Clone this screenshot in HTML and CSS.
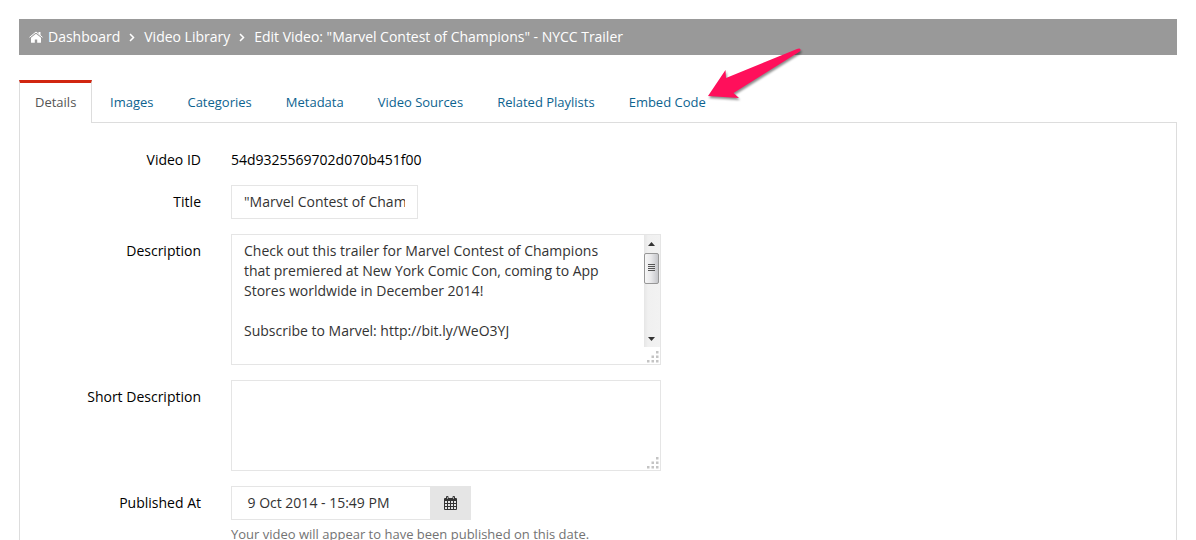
FILE: index.html
```html
<!DOCTYPE html>
<html lang="en">
<head>
<meta charset="utf-8">
<title>Edit Video</title>
<link rel="stylesheet" href="styles.css">
</head>
<body>
<nav class="breadcrumb">
  <svg class="home" viewBox="0 0 14 12" width="14" height="12"><path d="M7 2.700 12 6.800v4.400q0 .5-.5.5H8.200V8.500H5.800v3.200H2.500q-.5 0-.5-.5V6.800z"/><path d="M9.500 1h2v3.500l-2-1.700z"/><path class="roof" d="M.500 6.300 7 1l6.500 5.300"/></svg>
  <a>Dashboard</a>
  <svg class="sep" viewBox="0 0 6 9" width="6" height="9"><path d="M1 1l3.500 3.500L1 8"/></svg>
  <a>Video Library</a>
  <svg class="sep" viewBox="0 0 6 9" width="6" height="9"><path d="M1 1l3.500 3.500L1 8"/></svg>
  <span class="current">Edit Video: "Marvel Contest of Champions" - NYCC Trailer</span>
</nav>
<ul class="tabs">
  <li class="tab active">Details</li>
  <li class="tab">Images</li>
  <li class="tab">Categories</li>
  <li class="tab">Metadata</li>
  <li class="tab">Video Sources</li>
  <li class="tab">Related Playlists</li>
  <li class="tab">Embed Code</li>
</ul>
<main class="panel">
  <div class="row"><div class="label">Video ID</div><div class="static">54d9325569702d070b451f00</div></div>
  <div class="row"><div class="label">Title</div><div class="field title"><div class="clip">"Marvel Contest of Champions" - NYCC Trailer</div></div></div>
  <div class="row"><div class="label">Description</div>
    <div class="field area tall">
      <div class="text">Check out this trailer for Marvel Contest of Champions
<span class="tight">that premiered at New York Comic Con, coming to App</span>
Stores worldwide in December 2014!

Subscribe to Marvel: http://bit.ly/WeO3YJ</div>
      <div class="scrollbar">
        <svg class="up" viewBox="0 0 7 4" width="7" height="4"><path d="M3.500 0 7 4H0z"/></svg>
        <div class="thumb"><i></i><i></i><i></i><i></i></div>
        <svg class="down" viewBox="0 0 7 4" width="7" height="4"><path d="M0 0h7L3.500 4z"/></svg>
      </div>
      <svg class="grip" viewBox="0 0 12 12" width="12" height="12"><path d="M9 0h2.500v2.500H9zM4.500 4.500h2.500v2.500h-2.500zM9 4.500h2.500v2.500H9zM0 9h2.500v2.500H0zM4.500 9h2.500v2.500h-2.500zM9 9h2.500v2.500H9z"/></svg>
    </div>
  </div>
  <div class="row"><div class="label">Short Description</div>
    <div class="field area short">
      <svg class="grip" viewBox="0 0 12 12" width="12" height="12"><path d="M9 0h2.500v2.500H9zM4.500 4.500h2.500v2.500h-2.500zM9 4.500h2.500v2.500H9zM0 9h2.500v2.500H0zM4.500 9h2.500v2.500h-2.500zM9 9h2.500v2.500H9z"/></svg>
    </div>
  </div>
  <div class="row"><div class="label">Published At</div>
    <div>
      <div class="group">
        <div class="field date">9 Oct 2014 - 15:49 PM</div>
        <div class="addon"><svg class="calendar" viewBox="0 0 13 14" width="13" height="14"><path fill-rule="evenodd" d="M1 2h1V1q0-1 1-1h.5q1 0 1 1v1h4V1q0-1 1-1h.5q1 0 1 1v1h1q1 0 1 1v10q0 1-1 1H1q-1 0-1-1V3q0-1 1-1zM1 5v2h2V5zm3 0v2h2V5zm3 0v2h2V5zm3 0v2h2V5zM1 8v2h2V8zm3 0v2h2V8zm3 0v2h2V8zm3 0v2h2V8zM1 11v2h2v-2zm3 0v2h2v-2zm3 0v2h2v-2zm3 0v2h2v-2zM3 1v2h.6V1zm6.400 0v2h.6V1z"/></svg></div>
      </div>
      <div class="help">Your video will appear to have been published on this date.</div>
    </div>
  </div>
</main>
<svg class="pointer" viewBox="0 0 110 65" width="110" height="65"><path d="M8 56 25.500 30 26 38 97 9Q100 8 100.500 9.500 101 11 99 12L33.500 53 39 58z"/></svg>
</body>
</html>
```

FILE: styles.css
```css
* { box-sizing: border-box; }
body {
  margin: 0;
  padding: 19px 19px 0;
  height: 540px;
  overflow: hidden;
  background: #fff;
  color: #000;
  font: 14px/20px "Open Sans", sans-serif;
}
.breadcrumb {
  display: flex;
  align-items: center;
  height: 36px;
  padding-left: 10px;
  background: #999;
  color: #fff;
  white-space: nowrap;
}
.home { margin-right: 5px; fill: #fff; }
.home .roof { fill: none; stroke: #fff; stroke-width: 1; }
.sep { margin: 1px 9px 0 9px; fill: none; stroke: #fff; stroke-width: 1.5; }
.current { letter-spacing: -.02px; }
.tabs {
  display: flex;
  gap: 2px;
  height: 43px;
  margin: 25px 0 -1px;
  padding: 0;
  list-style: none;
  position: relative;
}
.tab {
  padding: 13px 16px 0;
  color: #0d638f;
  font-size: 13px;
  line-height: 19px;
  white-space: nowrap;
}
.tab.active {
  width: 73px;
  padding: 10px 15px 0;
  border: 1px solid #ddd;
  border-top: 3px solid #d12610;
  border-bottom: 0;
  background: #fff;
  color: #555;
}
.panel {
  height: 440px;
  padding-top: 20px;
  border: 1px solid #ddd;
}
.row { display: flex; margin-bottom: 15px; }
.label {
  width: 181px;
  margin-right: 30px;
  padding-top: 7px;
  text-align: right;
}
.static { padding-top: 7px; }
.field {
  border: 1px solid #e5e5e5;
  color: #333;
  white-space: nowrap;
}
.title { width: 187px; height: 34px; padding: 6px 12px; }
.clip { overflow: hidden; }
.area { position: relative; width: 430px; }
.tall { height: 131px; }
.short { height: 91px; }
.text { padding: 6px 12px; white-space: pre; }
.tight { letter-spacing: -.03px; }
.grip { position: absolute; right: 1px; bottom: 1px; fill: #c4c4c4; }
.scrollbar {
  position: absolute;
  top: 0;
  right: 0;
  width: 16px;
  height: 112px;
  padding-right: 1px;
  display: flex;
  flex-direction: column;
  align-items: center;
  background: linear-gradient(90deg, #e6e6e6, #f0f0f0 25%, #f2f2f2);
}
.up { margin-top: 7px; fill: #333; }
.down { margin: auto 0 6px; fill: #333; }
.thumb {
  display: flex;
  flex-direction: column;
  gap: 1px;
  align-items: center;
  width: 15px;
  height: 31px;
  margin-top: 7px;
  padding-top: 10px;
  border: 1px solid #979797;
  border-radius: 2px;
  background: linear-gradient(90deg, #f6f6f6, #e9e9eb 45%, #c5c6ca);
}
.thumb i { width: 7px; height: 1px; background: #555; }
.group { display: flex; }
.date { width: 199px; height: 34px; padding: 6px 15.5px; border-right: 0; }
.addon {
  display: flex;
  align-items: center;
  padding-left: 14px;
  width: 41px;
  height: 34px;
  background: #e5e5e5;
}
.calendar { fill: #333; }
.help { margin-top: 4px; color: #737373; font-size: 13px; }
.pointer {
  position: absolute;
  left: 700px;
  top: 40px;
  fill: #ff0f5b;
  filter: drop-shadow(1px 2px 1px rgba(0, 0, 0, .45));
}
```
